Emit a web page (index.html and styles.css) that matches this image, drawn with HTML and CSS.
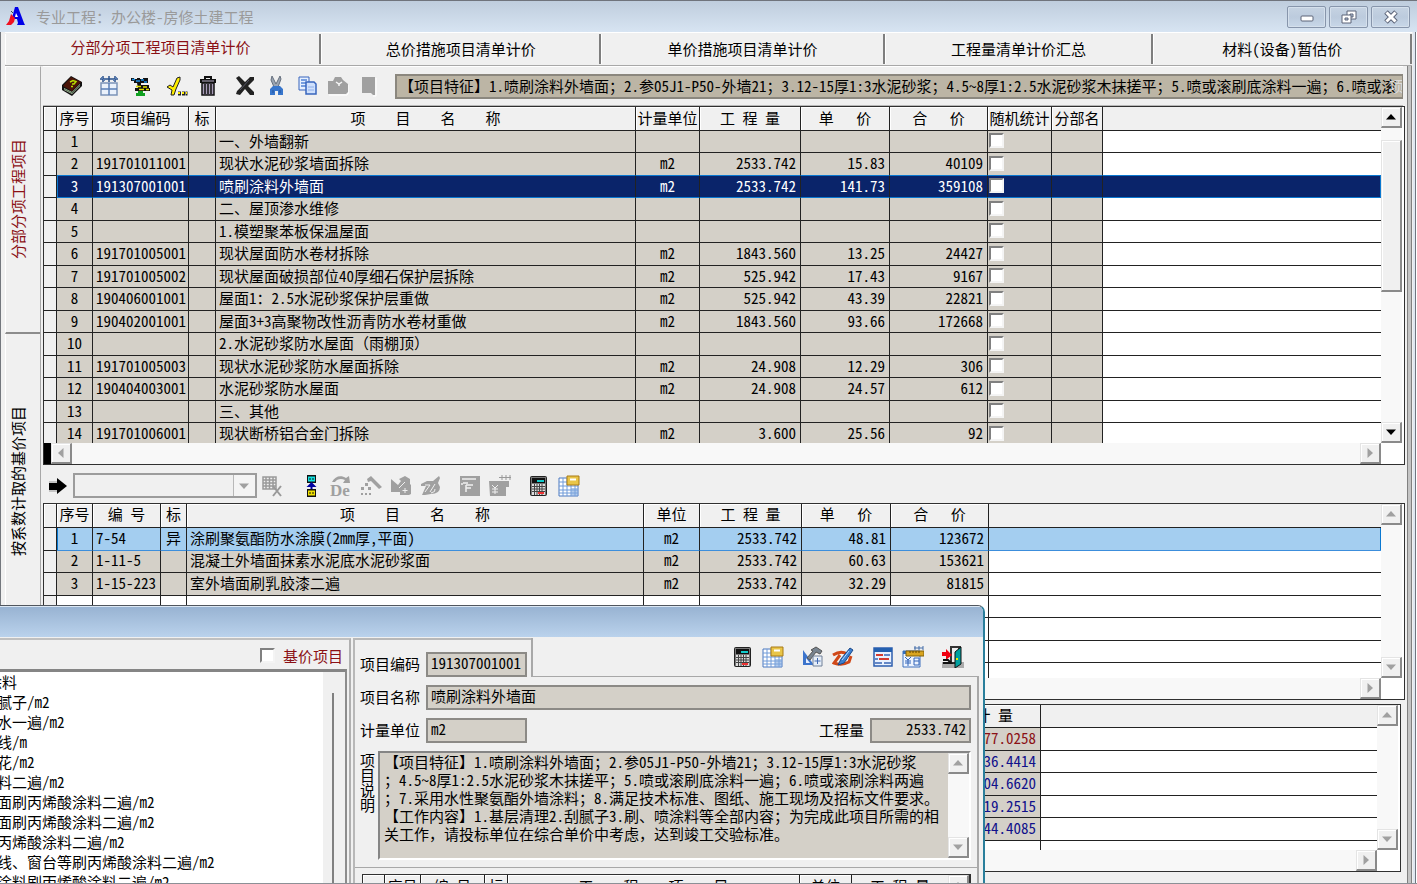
FILE: index.html
```html
<!DOCTYPE html>
<html lang="zh-CN">
<head>
<meta charset="utf-8">
<title>专业工程：办公楼-房修土建工程</title>
<link rel="stylesheet" href="styles.css">
</head>
<body>
<svg class="defs" aria-hidden="true">
  <symbol id="i-calc" viewBox="0 0 22 22"><rect x="2" y="1" width="17" height="20" rx="2" fill="#222"/><rect x="3" y="2" width="15" height="18" fill="#777"/><rect x="4" y="3" width="13" height="5" fill="#111"/><path d="M9 5h7v2H9z" fill="#1cc"/><path d="M4 9h13v11H4z" fill="#ddd"/><path d="M4 11.500h13M4 14h13M4 16.500h13M6.500 9v11M9 9v11M11.500 9v11M14 9v11" stroke="#444"/><path d="M10 17h6v2h-6z" fill="#e33"/></symbol>
  <symbol id="i-sheet" viewBox="0 0 22 22"><path d="M1 3h19v18H1z" fill="#fff" stroke="#4a78c0"/><path d="M1 7h19M1 11h19M1 15h19M1 18h19M5 3v18M9 3v18M13 3v18M17 3v18" stroke="#6f9ad8"/><path d="M13 13h7v8h-7z" fill="#7fa6dd" opacity=".6"/><path d="M9 1h12v9H9z" fill="#e9c548" stroke="#a87b16"/><path d="M12 4.500h6" stroke="#fff" stroke-width="2"/></symbol>
  <symbol id="i-tri" viewBox="0 0 10 6"><path d="M5 0l5 5.500H0z" fill="currentColor"/></symbol>
</svg>

<div class="window">
  <header class="titlebar">
    <svg class="logo" viewBox="0 0 20 20"><path d="M9 0h3l6 16 1 2h-8l1-2-1-4H8l-2-1z" fill="#0000e8"/><path d="M10 6l2 4h-3z" fill="#fff"/><path d="M5 7l4 4-1 4-3 3H0l3-4z" fill="#f01020"/><path d="M5 4l2 2" stroke="#345"/></svg>
    <h1>专业工程：办公楼-房修土建工程</h1>
    <button class="winbtn" aria-label="最小化"><svg viewBox="0 0 16 14"><rect x="2" y="6" width="12" height="5" rx="1" fill="#fff" stroke="#5c6478"/></svg></button>
    <button class="winbtn" aria-label="还原"><svg viewBox="0 0 16 14"><path d="M6 1h9v8H6z" fill="#fff" stroke="#5c6478"/><path d="M9 4h3v3H9z" fill="#b4c4da" stroke="#5c6478"/><path d="M1 5h9v8H1z" fill="#fff" stroke="#5c6478"/><path d="M4 8h3v2H4z" fill="#b4c4da" stroke="#5c6478"/></svg></button>
    <button class="winbtn" aria-label="关闭"><svg viewBox="0 0 16 14"><path d="M3 2l10 10M13 2L3 12" stroke="#5c6478" stroke-width="5"/><path d="M3.500 2.500l9 9M12.500 2.500l-9 9" stroke="#fff" stroke-width="3"/></svg></button>
  </header>

  <div class="frame">
    <nav class="tabs">
      <button class="tab t1 active">分部分项工程项目清单计价</button>
      <button class="tab t2">总价措施项目清单计价</button>
      <button class="tab t3">单价措施项目清单计价</button>
      <button class="tab t4">工程量清单计价汇总</button>
      <button class="tab t5">材料(设备)暂估价</button>
    </nav>

    <div class="main">
      <nav class="sidetabs">
        <button class="sidetab active"><span>分部分项工程项目</span></button>
        <button class="sidetab"><span>按系数计取的基价项目</span></button>
      </nav>

      <div class="content">
        <div class="toolbar top">
          <div class="group">
            <button class="tool" aria-label="帮助"><svg viewBox="0 0 22 22"><path d="M10 1l11 6v4L11 21 1 15v-5z" fill="#111"/><path d="M10 2l10 5-9 9-9-5z" fill="#4a1408"/><path d="M3 13l8 4 8-8v2l-8 8-8-4z" fill="#c8d0b0"/><path d="M3 14l8 4 8-8" fill="none" stroke="#4a6a50"/><path d="M9 7l3-1.500 3 1-2 2.500h-2M10 11.500h2" fill="none" stroke="#b8e000" stroke-width="1.500"/></svg></button>
          </div>
          <div class="group">
            <button class="tool" aria-label="表格"><svg viewBox="0 0 22 22"><path d="M2 4h18M5 1v6M11 1v6M17 1v6" stroke="#28508c" fill="none" stroke-width="1.500"/><path d="M3 2l4 4M15 6l4-4" stroke="#5a7fb8"/><rect x="3" y="8" width="16" height="12" fill="#eaf1fb" stroke="#7b93b8" stroke-width="1.500"/><path d="M11 8v12M3 14h16" stroke="#5a7fb8" stroke-width="1.500"/></svg></button>
            <button class="tool" aria-label="定位"><svg viewBox="0 0 22 22"><path d="M2 3h3v1h3V3h3v1h3V3h5v5H5V6H2z" fill="#111"/><path d="M3 4.500h3M7 6h4M12 5h3M15 7h3" stroke="#1890e8" stroke-width="1.500"/><path d="M8 8h4v2h8v3h1v3H6v-3h3z" fill="#111"/><path d="M7 11.500h5M10 14.500h5M14 12h4M17 14.500h3" stroke="#e0e000" stroke-width="1.500"/><path d="M9 16h5v2h2v3H7v-3h2z" fill="#10a020"/></svg></button>
          </div>
          <div class="group">
            <button class="tool" aria-label="检查"><svg viewBox="0 0 22 22"><path d="M1 12l3-2 3 2 4-9 3-1v3l-4 9-2 6H5l1-5z" fill="#ffee00" stroke="#222"/><path d="M12 18.500h3M16 18.500h3M19.500 18.500h2" stroke="#222" stroke-width="4"/><path d="M12 18h2M16 18h2M20 18h1" stroke="#ffee00" stroke-width="2"/></svg></button>
            <button class="tool" aria-label="删除"><svg viewBox="0 0 22 22"><path d="M8 4V2h6v2" fill="none" stroke="#111" stroke-width="2"/><path d="M3 4h16v4H3z" fill="#111"/><path d="M5 6h12" stroke="#b8aec8"/><path d="M5 8h12v12H5z" fill="#a89cb8" stroke="#111" stroke-width="1.500"/><path d="M8 9v10M11 9v10M14 9v10" stroke="#111" stroke-width="1.500"/></svg></button>
          </div>
          <div class="group">
            <button class="tool" aria-label="清除"><svg viewBox="0 0 22 22"><path d="M2 3l3-2 6 6 5-5h4v3l-6 6 6 6v3h-4l-5-6-5 6-4-1 1-3 5-5z" fill="#222"/><path d="M15 5l-9 10" stroke="#556" /></svg></button>
            <button class="tool" aria-label="剪切"><svg viewBox="0 0 22 22"><path d="M7 1l4 8 4-8 1 3-3 8h-4L6 5z" fill="#9ba5b3" stroke="#66707e"/><path d="M8 11h7l3 3v6h-5v-4h-3v4H5v-6z" fill="#3876cc"/><path d="M8 15v3M15 15v3" stroke="#20509c"/></svg></button>
            <button class="tool" aria-label="复制"><svg viewBox="0 0 22 22"><path d="M3 2h10v13H3z" fill="#e6f0ff" stroke="#3865bd"/><path d="M5 5h6M5 8h6M5 11h6" stroke="#5283d6" stroke-width="1.500"/><path d="M10 7h8l2 2v10H10z" fill="#cfe0fc" stroke="#3865bd" stroke-width="1.500"/><path d="M12 12h6M12 15h6" stroke="#8fb0ea"/></svg></button>
            <button class="tool" aria-label="粘贴" disabled><svg viewBox="0 0 22 22"><path d="M1 6h5l2-4h6l2 3 5 4v8l-2 2H1z" fill="#a0a0a0"/><path d="M9 7l3 2 3-2M12 9v2" fill="none" stroke="#f4f4f4" stroke-width="1.500"/><path d="M2 20h18l2-3V10" fill="none" stroke="#fff"/></svg></button>
            <button class="tool" aria-label="页面" disabled><svg viewBox="0 0 22 22"><path d="M4 2h13v18h-2l-2-2H4z" fill="#a0a0a0"/><path d="M18 3v18h-3" fill="none" stroke="#fff"/></svg></button>
          </div>
          <div class="summary"><p>【项目特征】1.喷刷涂料外墙面；2.参05J1-P50-外墙21；3.12-15厚1:3水泥砂浆；4.5~8厚1:2.5水泥砂浆木抹搓平；5.喷或滚刷底涂料一遍；6.喷或滚</p><span class="echo">项</span></div>
        </div>

        <section class="grid g1">
          <div class="view">
            <table>
              <colgroup><col class="w13"><col class="w36"><col class="w96"><col class="w27"><col class="w420"><col class="w64"><col class="w101"><col class="w89"><col class="w98"><col class="w64"><col class="w51"><col></colgroup>
              <thead><tr><th></th><th>序号</th><th>项目编码</th><th>标</th><th>项    目    名    称</th><th>计量单位</th><th>工 程 量</th><th>单   价</th><th>合   价</th><th>随机统计</th><th>分部名</th><th></th></tr></thead>
              <tbody>
              <tr><td></td><td>1</td><td></td><td></td><td>一、外墙翻新</td><td></td><td></td><td></td><td></td><td><input type="checkbox" aria-label="随机统计 1"></td><td></td><td></td></tr>
              <tr class="before"><td></td><td>2</td><td>191701011001</td><td></td><td>现状水泥砂浆墙面拆除</td><td>m2</td><td>2533.742</td><td>15.83</td><td>40109</td><td><input type="checkbox" aria-label="随机统计 2"></td><td></td><td></td></tr>
              <tr class="selected"><td></td><td>3</td><td>191307001001</td><td></td><td>喷刷涂料外墙面</td><td>m2</td><td>2533.742</td><td>141.73</td><td>359108</td><td><input type="checkbox" aria-label="随机统计 3"></td><td></td><td></td></tr>
              <tr><td></td><td>4</td><td></td><td></td><td>二、屋顶渗水维修</td><td></td><td></td><td></td><td></td><td><input type="checkbox" aria-label="随机统计 4"></td><td></td><td></td></tr>
              <tr><td></td><td>5</td><td></td><td></td><td>1.模塑聚苯板保温屋面</td><td></td><td></td><td></td><td></td><td><input type="checkbox" aria-label="随机统计 5"></td><td></td><td></td></tr>
              <tr><td></td><td>6</td><td>191701005001</td><td></td><td>现状屋面防水卷材拆除</td><td>m2</td><td>1843.560</td><td>13.25</td><td>24427</td><td><input type="checkbox" aria-label="随机统计 6"></td><td></td><td></td></tr>
              <tr><td></td><td>7</td><td>191701005002</td><td></td><td>现状屋面破损部位40厚细石保护层拆除</td><td>m2</td><td>525.942</td><td>17.43</td><td>9167</td><td><input type="checkbox" aria-label="随机统计 7"></td><td></td><td></td></tr>
              <tr><td></td><td>8</td><td>190406001001</td><td></td><td>屋面1：2.5水泥砂浆保护层重做</td><td>m2</td><td>525.942</td><td>43.39</td><td>22821</td><td><input type="checkbox" aria-label="随机统计 8"></td><td></td><td></td></tr>
              <tr><td></td><td>9</td><td>190402001001</td><td></td><td>屋面3+3高聚物改性沥青防水卷材重做</td><td>m2</td><td>1843.560</td><td>93.66</td><td>172668</td><td><input type="checkbox" aria-label="随机统计 9"></td><td></td><td></td></tr>
              <tr><td></td><td>10</td><td></td><td></td><td>2.水泥砂浆防水屋面（雨棚顶）</td><td></td><td></td><td></td><td></td><td><input type="checkbox" aria-label="随机统计 10"></td><td></td><td></td></tr>
              <tr><td></td><td>11</td><td>191701005003</td><td></td><td>现状水泥砂浆防水屋面拆除</td><td>m2</td><td>24.908</td><td>12.29</td><td>306</td><td><input type="checkbox" aria-label="随机统计 11"></td><td></td><td></td></tr>
              <tr><td></td><td>12</td><td>190404003001</td><td></td><td>水泥砂浆防水屋面</td><td>m2</td><td>24.908</td><td>24.57</td><td>612</td><td><input type="checkbox" aria-label="随机统计 12"></td><td></td><td></td></tr>
              <tr><td></td><td>13</td><td></td><td></td><td>三、其他</td><td></td><td></td><td></td><td></td><td><input type="checkbox" aria-label="随机统计 13"></td><td></td><td></td></tr>
              <tr><td></td><td>14</td><td>191701006001</td><td></td><td>现状断桥铝合金门拆除</td><td>m2</td><td>3.600</td><td>25.56</td><td>92</td><td><input type="checkbox" aria-label="随机统计 14"></td><td></td><td></td></tr>
              </tbody>
            </table>
          </div>
          <div class="vbar on"><button class="sb" aria-label="向上"><svg><use href="#i-tri"/></svg></button><i class="thumb"></i><button class="sb down" aria-label="向下"><svg><use href="#i-tri"/></svg></button></div>
          <div class="hbar"><i class="split"></i><button class="sb left" aria-label="向左"><svg><use href="#i-tri"/></svg></button><button class="sb right" aria-label="向右"><svg><use href="#i-tri"/></svg></button></div>
        </section>

        <div class="toolbar mid">
          <svg class="arrow" viewBox="0 0 22 22"><path d="M2 8h8V3l10 8-10 8v-4H2z" fill="#000"/><path d="M2 7h8M2 16h8" fill="none" stroke="#999"/></svg>
          <div class="combo"><select aria-label="定额选择" disabled><option></option></select><svg><use href="#i-tri"/></svg></div>
          <button class="tool" aria-label="取消" disabled><svg viewBox="0 0 22 22"><path d="M2 2h13v12H2zM2 5h13M2 8h13M2 11h13M5 2v12M8.500 2v12M12 2v12" fill="none" stroke="#999" stroke-width="1.500"/><path d="M12 11l8 10M20 11l-8 10" stroke="#999" stroke-width="2"/></svg></button>
          <div class="group">
            <button class="tool" aria-label="上移"><svg viewBox="0 0 22 22"><path d="M7 0h9v8H7zM7 14h9v8H7z" fill="#111"/><path d="M8 1.500h7v5H8z" fill="#10e0e0"/><path d="M8 15.500h7v5H8z" fill="#f0e000"/><path d="M10 3v2M13 3v2M10 17v2M13 17v2" stroke="#111"/><path d="M11.500 7l5 5h-4v2h-2v-2h-4z" fill="#0000a0"/></svg></button>
            <button class="tool" aria-label="换算" disabled><svg viewBox="0 0 22 22"><path d="M2 7c3-6 9-7 14-4l3-2 1 7h-7l2-3C11 3 7 4 5 7z" fill="#a0a0a0"/><text x="0" y="21" class="de">De</text></svg></button>
            <button class="tool" aria-label="拆分" disabled><svg viewBox="0 0 22 22"><path d="M7 4l4-3 11 11-3 2-8-8-3 1z" fill="#a0a0a0"/><path d="M5 8h3v3H5zM1 12h3v3H1zM8 12h3v3H8zM1 18h2v2H1zM5 18h2v2H5zM9 18h2v2H9z" fill="#a0a0a0"/></svg></button>
            <button class="tool" aria-label="材料" disabled><svg viewBox="0 0 22 22"><path d="M1 4l7 6 3-4-2-2 6-3 5 3v5l1 1v9l-2 1h-9v-3H1z" fill="#a0a0a0"/><path d="M9 13l6-6M15 13v5M12.500 15.500h5" stroke="#f0f0f0"/></svg></button>
            <button class="tool" aria-label="编辑" disabled><svg viewBox="0 0 22 22"><path d="M1 9l6-3h6l6-5 1 2-2 5 2 4q0 7-9 7l-6 1H2l4-9H1z" fill="#a0a0a0"/><path d="M5 10h5l-5 7M10 17l5-8M15 14q1 3-4 4" stroke="#f0f0f0" fill="none"/></svg></button>
          </div>
          <div class="group">
            <button class="tool" aria-label="筛选" disabled><svg viewBox="0 0 22 22"><path d="M1 1h20v20H1z" fill="#a0a0a0"/><path d="M3 4h14M4 8h5M7 10h7M7 10v7M7 13h5M3 8v2" stroke="#f0f0f0" fill="none" stroke-width="1.500"/></svg></button>
            <button class="tool" aria-label="标尺" disabled><svg viewBox="0 0 22 22"><path d="M0 6h20v6h-3v9H1z" fill="#a0a0a0"/><path d="M10 2.500h12M13 0v5M17 0v5M21 0v5" stroke="#999"/><path d="M3 10l3 3 3-3M6 13v6M3 14h6M3 17h6" stroke="#f0f0f0" fill="none"/></svg></button>
          </div>
          <div class="group">
            <button class="tool" aria-label="计算器"><svg><use href="#i-calc"/></svg></button>
            <button class="tool" aria-label="明细表"><svg><use href="#i-sheet"/></svg></button>
          </div>
        </div>

        <section class="grid g2">
          <div class="view">
            <table>
              <colgroup><col class="w13"><col class="w36"><col class="w68"><col class="w26"><col class="w457"><col class="w56"><col class="w102"><col class="w89"><col class="w98"><col></colgroup>
              <thead><tr><th></th><th>序号</th><th>编 号</th><th>标</th><th>项    目    名    称</th><th>单位</th><th>工 程 量</th><th>单   价</th><th>合   价</th><th></th></tr></thead>
              <tbody>
              <tr class="current"><td></td><td>1</td><td>7-54</td><td>异</td><td>涂刷聚氨酯防水涂膜(2mm厚,平面)</td><td>m2</td><td>2533.742</td><td>48.81</td><td>123672</td><td></td></tr>
              <tr><td></td><td>2</td><td>1-11-5</td><td></td><td>混凝土外墙面抹素水泥底水泥砂浆面</td><td>m2</td><td>2533.742</td><td>60.63</td><td>153621</td><td></td></tr>
              <tr><td></td><td>3</td><td>1-15-223</td><td></td><td>室外墙面刷乳胶漆二遍</td><td>m2</td><td>2533.742</td><td>32.29</td><td>81815</td><td></td></tr>
              <tr class="blank"><td></td><td></td><td></td><td></td><td></td><td></td><td></td><td></td><td></td><td></td></tr>
              <tr class="blank"><td></td><td></td><td></td><td></td><td></td><td></td><td></td><td></td><td></td><td></td></tr>
              <tr class="blank"><td></td><td></td><td></td><td></td><td></td><td></td><td></td><td></td><td></td><td></td></tr>
              <tr class="blank"><td></td><td></td><td></td><td></td><td></td><td></td><td></td><td></td><td></td><td></td></tr>
              </tbody>
            </table>
          </div>
          <div class="vbar"><button class="sb" aria-label="向上"><svg><use href="#i-tri"/></svg></button><button class="sb down" aria-label="向下"><svg><use href="#i-tri"/></svg></button></div>
          <div class="hbar"><button class="sb right" aria-label="向右"><svg><use href="#i-tri"/></svg></button></div>
        </section>

        <section class="grid g3">
          <div class="view">
            <table>
              <colgroup><col class="w882"><col class="w115"><col></colgroup>
              <thead><tr><th></th><th>合 计 量</th><th></th></tr></thead>
              <tbody>
              <tr class="red"><td></td><td>77.0258</td><td></td></tr>
              <tr><td></td><td>36.4414</td><td></td></tr>
              <tr><td></td><td>04.6620</td><td></td></tr>
              <tr><td></td><td>19.2515</td><td></td></tr>
              <tr><td></td><td>44.4085</td><td></td></tr>
              <tr class="blank"><td></td><td></td><td></td></tr>
              </tbody>
            </table>
          </div>
          <div class="vbar"><button class="sb" aria-label="向上"><svg><use href="#i-tri"/></svg></button><button class="sb down" aria-label="向下"><svg><use href="#i-tri"/></svg></button></div>
          <div class="hbar"><button class="sb right" aria-label="向右"><svg><use href="#i-tri"/></svg></button></div>
        </section>
      </div>
    </div>
  </div>

  <section class="dialog" role="dialog" aria-label="清单项目">
    <div class="dialog-title"></div>
    <div class="dialog-body">
      <div class="tree">
        <label class="base"><input type="checkbox">基价项目</label>
        <div class="treebox">
          <ul>
            <li class="parent">涂料</li>
            <li>腻子/m2</li>
            <li>水一遍/m2</li>
            <li>线/m</li>
            <li>花/m2</li>
            <li>料二遍/m2</li>
            <li>面刷丙烯酸涂料二遍/m2</li>
            <li>面刷丙烯酸涂料二遍/m2</li>
            <li>丙烯酸涂料二遍/m2</li>
            <li>线、窗台等刷丙烯酸涂料二遍/m2</li>
            <li>涂料刷丙烯酸涂料二遍/m2</li>
          </ul>
          <div class="treebar"><i></i></div>
        </div>
      </div>
      <div class="detail">
        <div class="row head">
          <div class="code"><label for="code">项目编码</label><input id="code" class="short" value="191307001001" readonly></div>
          <div class="tools">
            <div class="group">
              <button class="tool" aria-label="计算器"><svg><use href="#i-calc"/></svg></button>
              <button class="tool" aria-label="明细表"><svg><use href="#i-sheet"/></svg></button>
            </div>
            <div class="group">
              <button class="tool" aria-label="材料"><svg viewBox="0 0 22 22"><path d="M1 4l11 15H1z" fill="#3c74cc"/><path d="M4 12l4 5H4z" fill="#e8f0ff"/><path d="M9 4l5-3 6 4-2 3-4-2-6 8-3-2 6-7z" fill="#788490" stroke="#555"/><path d="M11 10h9v10h-9z" fill="#e6eef8" stroke="#708098"/><path d="M15.500 12v6M12.500 15h6" stroke="#4068b0"/></svg></button>
              <button class="tool" aria-label="编辑"><svg viewBox="0 0 22 22"><path d="M1 9q8-5 14-1M8 9L2 17q8 3 15-1l2-6" fill="none" stroke="#d04818" stroke-width="3"/><path d="M18 2l3 2-9 13-6 2 3-6z" fill="#3c80d0" stroke="#1c4888"/><path d="M17 5l-7 9" stroke="#b8dcff"/></svg></button>
            </div>
            <div class="group">
              <button class="tool" aria-label="筛选"><svg viewBox="0 0 22 22"><path d="M2 2h18v18H2z" fill="#e9f2ff" stroke="#2c5eae" stroke-width="1.500"/><path d="M2 2h18v4H2z" fill="#2460b0"/><path d="M4 9h7M7 13h10" stroke="#d43b30" stroke-width="2"/><path d="M3 13h3M12 9h6M12 17h7M3 17h7" stroke="#6588c6" stroke-width="2"/></svg></button>
              <button class="tool" aria-label="标尺"><svg viewBox="0 0 22 22"><path d="M1 5h17v16H1z" fill="#edf4ff" stroke="#3f70bd"/><path d="M1 5h17v3H1z" fill="#3470c0"/><path d="M3 11l3 3 3-3M6 14v6M3 15h6M3 17h6M12 12h5v7h-5zM12 15h5" stroke="#3365b8" fill="none"/><path d="M4 5h18v5H4z" fill="#d9a520" stroke="#80600c"/><path d="M8 5v2M11 5v2M14 5v2M17 5v2" stroke="#624500"/><path d="M12 2h9M13 0v4M17 0v4M21 0v4" stroke="#426ca8"/></svg></button>
            </div>
            <button class="tool" aria-label="退出"><svg viewBox="0 0 22 22"><path d="M0 16h22v6H0z" fill="#aaa"/><path d="M8 0h11v18H8z" fill="#333"/><path d="M10 2h6v14h-6z" fill="#eee"/><path d="M13 6l6-5v17l-6 4z" fill="#00a0a0" stroke="#111"/><path d="M14 12h2v2h-2z" fill="#ee0"/><path d="M0 6h4V3l6 6-6 5v-4H0z" fill="#f00010"/><path d="M1 14h5l3 3H1" fill="none" stroke="#111" stroke-width="2"/></svg></button>
          </div>
        </div>
        <div class="fields">
          <div class="row"><label for="name">项目名称</label><input id="name" class="long" value="喷刷涂料外墙面" readonly></div>
          <div class="row"><label for="unit">计量单位</label><input id="unit" class="short" value="m2" readonly><label class="push" for="qty">工程量</label><input id="qty" class="short num" value="2533.742" readonly></div>
          <div class="memo-row">
            <label class="stack" for="memo">项目说明</label>
            <div class="memo">
<textarea id="memo" readonly>【项目特征】1.喷刷涂料外墙面；2.参05J1-P50-外墙21；3.12-15厚1:3水泥砂浆
；4.5~8厚1:2.5水泥砂浆木抹搓平；5.喷或滚刷底涂料一遍；6.喷或滚刷涂料两遍
；7.采用水性聚氨酯外墙涂料；8.满足技术标准、图纸、施工现场及招标文件要求。
【工作内容】1.基层清理2.刮腻子3.刷、喷涂料等全部内容；为完成此项目所需的相
关工作，请投标单位在综合单价中考虑，达到竣工交验标准。</textarea>
              <div class="vbar"><button class="sb" aria-label="向上"><svg><use href="#i-tri"/></svg></button><button class="sb down" aria-label="向下"><svg><use href="#i-tri"/></svg></button></div>
            </div>
          </div>
        </div>
        <div class="sub">
          <div class="subgrid">
            <table>
              <colgroup><col class="w22"><col class="w36"><col class="w64"><col class="w23"><col><col class="w52"><col class="w96"></colgroup>
              <thead><tr><th></th><th>序号</th><th>编 号</th><th>标</th><th>工    程    项    目</th><th>单位</th><th>工 程 量</th></tr></thead>
            </table>
            <div class="vbar"><button class="sb" aria-label="向上"><svg><use href="#i-tri"/></svg></button></div>
          </div>
        </div>
      </div>
    </div>
  </section>
</div>
</body>
</html>
```

FILE: styles.css
```css
* { box-sizing: border-box; }
body {
  margin: 0;
  background: #f0f0f0;
  color: #000;
  font: 15px/20px "Noto Sans Mono CJK SC", "Noto Sans CJK SC", monospace;
}
button, input, select, textarea {
  margin: 0;
  padding: 0;
  border: 0;
  border-radius: 0;
  color: inherit;
  font: inherit;
}
svg { display: block; }
.defs { position: absolute; width: 0; height: 0; }

.window {
  position: relative;
  display: flex;
  flex-direction: column;
  height: 100vh;
  overflow: hidden;
  border-bottom: 1px solid #8c9096;
}
.titlebar {
  display: flex;
  flex: none;
  align-items: center;
  gap: 3px;
  height: 32px;
  padding: 1px 7px 1px 6px;
  border-top: 1px solid #70747c;
  background: linear-gradient(#bfcddd, #d7e4f2);
}
.logo { width: 20px; height: 20px; margin-right: 7px; }
.titlebar h1 {
  flex: 1;
  margin: 0;
  color: #9a9a9a;
  font-size: 15px;
  font-weight: 400;
}
.winbtn {
  display: grid;
  place-items: center;
  width: 39px;
  height: 22px;
  border: 1px solid #8795ab;
  border-radius: 2px;
  background: linear-gradient(#c6d3e2, #bccbdd 50%, #c8d7e8);
  box-shadow: inset 0 0 0 1px #d5e0ec;
}
.winbtn svg { width: 16px; height: 14px; }

.frame {
  display: flex;
  flex: 1;
  flex-direction: column;
  min-height: 0;
  padding: 0 5px 0 4px;
  border-left: 1px solid #73777d;
  background: linear-gradient(90deg, #f0f0f0 calc(100% - 4px), #dfe7f0 0, #dfe7f0 calc(100% - 2px), #6f7680 0, #6f7680 calc(100% - 1px), #fff 0);
}
.tabs {
  display: flex;
  flex: none;
  height: 34px;
  border-top: 1px solid #fff;
  border-bottom: 1px solid #a8a8a8;
}
.tab {
  height: 30px;
  margin-top: 1px;
  border-right: 2px solid #7e7e7e;
  border-left: 1px solid #fff;
  background: #f0f0f0;
}
.tab.active { padding: 0 4px 4px 0; color: #8b1015; }
.t1 { flex: 313; }
.t2 { flex: 281; }
.t3 { flex: 284; }
.t4 { flex: 269; }
.t5 { flex: 259; }

.main { display: flex; flex: 1; min-height: 0; }
.sidetabs {
  display: flex;
  flex: none;
  flex-direction: column;
  width: 36px;
  border-top: 1px solid #fff;
  border-right: 1px solid #a8a8a8;
}
.sidetab {
  display: flex;
  flex: none;
  align-items: center;
  height: 294px;
  padding-left: 2px;
  border-left: 1px solid #fff;
  background: #f0f0f0;
}
.sidetab.active {
  height: 267px;
  border-bottom: 2px solid #8c8c8c;
  color: #8b1015;
}
.sidetab span {
  margin: 0 auto 0 0;
  writing-mode: vertical-rl;
  text-orientation: sideways;
  transform: rotate(180deg);
}

.content {
  display: grid;
  flex: 1;
  grid-template-rows: 40px 359fr 38px 198fr 4px 168fr 11px;
  min-width: 0;
  padding-left: 2px;
  border-right: 1px solid #808080;
  box-shadow: inset -3px 0 #c4c4c4, inset -4px 0 #808080;
}
.toolbar { display: flex; align-items: center; min-width: 0; }
.toolbar.top { gap: 15px; margin-right: 8px; padding-left: 18px; border-top: 1px solid #fff; border-bottom: 1px solid #b8b8b8; }
.group { display: flex; gap: 9px; }
.tool { flex: none; width: 22px; height: 22px; background: none; }
.tool svg { width: 22px; height: 22px; }
.de { fill: #a0a0a0; font: bold 17px "Liberation Serif", serif; }
.summary {
  position: relative;
  flex: 1;
  min-width: 0;
  height: 25px;
  padding-left: 2px;
  overflow: hidden;
  border: 2px solid #8b877e;
  border-right-width: 1px;
  background: #bcb5a5;
  line-height: 19px;
}
.summary p { margin: 0; white-space: nowrap; }
.echo { position: absolute; top: 0; right: -2px; color: #dcdcdc; }
.toolbar.mid { gap: 4px; padding: 4px 0 0 4px; }
.arrow { width: 22px; height: 22px; }
.combo { position: relative; color: #a0a0a0; }
.combo select {
  display: block;
  appearance: none;
  width: 184px;
  height: 25px;
  border: 2px solid #9c9c9c;
  background: linear-gradient(90deg, #b8b8b8 1px, #f4f4f4 0) right / 22px 100% no-repeat, #f0f0f0;
  opacity: 1;
}
.combo svg { position: absolute; top: 10px; right: 8px; width: 10px; height: 6px; transform: rotate(180deg); pointer-events: none; }
.toolbar.mid .group { gap: 8px; margin-left: 13px; }

.grid {
  display: grid;
  grid-template-columns: 1fr 23px;
  grid-template-rows: 1fr 21px;
  min-width: 0;
  min-height: 0;
  margin-right: 6px;
  border: 1px solid #303030;
  background: #fff;
}
.g3 { grid-row: 6; margin-right: 10px; }
.view { min-width: 0; min-height: 0; overflow: hidden; }
table {
  width: 100%;
  table-layout: fixed;
  border-spacing: 0;
  border-collapse: separate;
}
th, td {
  height: 22px;
  padding: 0 0 2px;
  overflow: hidden;
  border-right: 1px solid #222;
  border-bottom: 1px solid #222;
  background: #d4d0c8;
  font-weight: 400;
  line-height: 18px;
  text-align: center;
  white-space: pre;
}
th { height: 24px; background: #f0f0f0; box-shadow: inset 1px 1px #fff; }
.g3 th { height: 23px; }
th:last-child, td:last-child { border-right: 0; box-shadow: none; }
td:last-child, .blank td { background: #fff; }
td:first-child { background: #f0f0f0; }
.g3 td:first-child { background: #d4d0c8; }
.g1 tr:nth-child(even) td, .g2 tr:nth-child(odd) td, .g3 tr:nth-child(odd) td { height: 23px; }
.g1 td:nth-child(3), .g2 td:nth-child(3) { padding-left: 3px; text-align: left; }
td:nth-child(5) { padding-left: 3px; text-align: left; }
td:nth-child(n+7) { padding-right: 4px; text-align: right; }
.g3 td:nth-child(2) { padding-right: 4px; color: #10108b; text-align: right; }
.g3 .red td:nth-child(2) { color: #8b1015; }
.g1 td:nth-child(10) { padding: 0 0 2px 1px; text-align: left; }
.before td:nth-child(n+2), .selected td:nth-child(n+2) { border-bottom-color: #0a78d0; }
.selected td:nth-child(n+2) { background: #0a246a; color: #fff; }
.selected td:nth-child(2) { box-shadow: inset 1px 0 #0a78d0; }
.selected td:last-child { box-shadow: inset -1px 0 #0a78d0; }
.current td:nth-child(n+2) { background: #a4cef0; border-bottom-color: #3c8edc; }
.current td:nth-child(2) { box-shadow: inset 1px 0 #0a78d0; }
.current td:last-child { box-shadow: inset -1px 0 #0a78d0; }

input[type="checkbox"] {
  display: block;
  appearance: none;
  width: 15px;
  height: 15px;
  border: 2px solid #f4f4f4;
  border-top-color: #808080;
  border-left-color: #808080;
  background: #fff;
}

.w13 { width: 13px; }
.w22 { width: 22px; }
.w23 { width: 23px; }
.w26 { width: 26px; }
.w27 { width: 27px; }
.w36 { width: 36px; }
.w51 { width: 51px; }
.w52 { width: 52px; }
.w56 { width: 56px; }
.w64 { width: 64px; }
.w68 { width: 68px; }
.w89 { width: 89px; }
.w96 { width: 96px; }
.w98 { width: 98px; }
.w101 { width: 101px; }
.w102 { width: 102px; }
.w115 { width: 115px; }
.w420 { width: 420px; }
.w457 { width: 457px; }
.w882 { width: 882px; }

.vbar, .hbar { display: flex; background: #f8f8f8; color: #a0a0a0; }
.vbar { flex-direction: column; width: 21px; }
.vbar.on { color: #000; }
.sb {
  display: grid;
  flex: none;
  place-items: center;
  width: 21px;
  height: 21px;
  border: 1px solid #e4e4e4;
  border-right: 2px solid #8a8a8a;
  border-bottom: 2px solid #8a8a8a;
  background: #f0f0f0;
  box-shadow: inset 1px 1px #fff;
}
.sb svg { width: 10px; height: 6px; }
.sb.down { margin-top: auto; }
.sb.down svg { transform: rotate(180deg); }
.sb.left svg { transform: rotate(-90deg); }
.sb.right { margin-left: auto; }
.sb.right svg { transform: rotate(90deg); }
.thumb {
  height: 152px;
  margin-top: 12px;
  border: 1px solid #e4e4e4;
  border-right: 2px solid #8a8a8a;
  border-bottom: 2px solid #8a8a8a;
  background: #f0f0f0;
  box-shadow: inset 1px 1px #fff;
}
.split { width: 7px; background: #000; }

.dialog {
  position: absolute;
  top: 605px;
  bottom: 0;
  left: 0;
  display: flex;
  flex-direction: column;
  width: 985px;
  overflow: hidden;
  border-top: 1px solid #50565e;
  border-right: 2px solid #2a7f9c;
  border-radius: 0 7px 0 0;
  background: #f0f0f0;
}
.dialog-title { flex: none; height: 31px; border-top: 1px solid #dce8f4; background: linear-gradient(#98b3d2, #bad2ec); }
.dialog-body { display: flex; flex: 1; min-height: 0; padding-top: 1px; }
.tree {
  display: flex;
  flex: none;
  flex-direction: column;
  width: 351px;
  border-top: 2px solid #c0c0c0;
  border-right: 2px solid #b0b0b0;
}
.base {
  display: flex;
  align-items: center;
  justify-content: flex-end;
  gap: 8px;
  height: 29px;
  padding: 2px 6px 0 0;
  color: #8b1015;
}
.treebox {
  display: flex;
  flex: 1;
  min-height: 0;
  margin-right: 2px;
  border-top: 3px solid #858585;
  border-right: 2px solid #8c8c8c;
}
.treebox ul {
  flex: 1;
  margin: 0;
  padding: 0;
  overflow: hidden;
  background: #fff;
  list-style: none;
}
.treebox li { margin-left: -3px; white-space: nowrap; }
.treebox .parent { margin-left: -13px; }
.treebar { width: 22px; padding: 21px 11px 0 9px; }
.treebar i { display: block; height: 100%; background: #808080; }
.detail {
  display: flex;
  flex: 1;
  flex-direction: column;
  min-width: 0;
  margin-left: 2px;
  padding-right: 4px;
  border-left: 2px solid #b8b8b8;
}
.row { display: flex; align-items: center; gap: 6px; }
.row label { padding-bottom: 2px; }
.head { flex: none; align-items: stretch; gap: 0; height: 39px; }
.code {
  display: flex;
  flex: none;
  align-items: center;
  gap: 6px;
  width: 176px;
  padding: 12px 0 0 5px;
  border-top: 2px solid #b8b8b8;
}
.tools {
  display: flex;
  flex: 1;
  align-items: center;
  justify-content: flex-end;
  gap: 18px;
  padding-right: 15px;
  border-bottom: 1px solid #a8a8a8;
  border-left: 2px solid #a8a8a8;
}
.tools .group { gap: 8px; }
.dialog input.short, .dialog input.long {
  height: 25px;
  padding: 0 3px 4px;
  border: 2px solid #8c8a86;
  background: #d4d0c8;
}
.short { width: 101px; min-width: 0; }
.long { flex: 1; min-width: 0; }
.num { text-align: right; }
.push { margin-left: auto; }
.fields {
  display: flex;
  flex: none;
  flex-direction: column;
  gap: 8px;
  padding: 8px 6px 7px 5px;
  border-right: 2px solid #a8a8a8;
}
.memo-row { display: flex; gap: 3px; }
.stack { width: 15px; padding-top: 1px; line-height: 15px; }
.memo {
  display: flex;
  flex: 1;
  height: 109px;
  border: 2px solid #fff;
  border-top-color: #858585;
  border-left-color: #858585;
}
.memo textarea {
  flex: 1;
  padding: 0 0 0 4px;
  overflow: hidden;
  background: #d4d0c8;
  line-height: 18px;
  resize: none;
  white-space: pre;
}
.sub { flex: 1; min-height: 0; padding: 6px 6px 0 7px; overflow: hidden; border-top: 1px solid #a8a8a8; border-right: 2px solid #a8a8a8; }
.subgrid { display: flex; border: 2px solid #303030; border-width: 1px 2px 0 1px; }
```
